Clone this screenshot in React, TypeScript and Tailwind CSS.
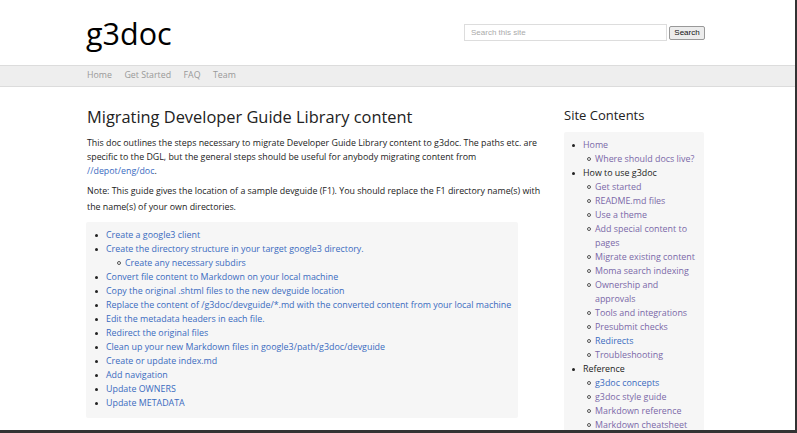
import React from "react";

type Item = { label: string; sub?: string[] };

const steps: Item[] = [
  { label: "Create a google3 client" },
  { label: "Create the directory structure in your target google3 directory.", sub: ["Create any necessary subdirs"] },
  { label: "Convert file content to Markdown on your local machine" },
  { label: "Copy the original .shtml files to the new devguide location" },
  { label: "Replace the content of /g3doc/devguide/*.md with the converted content from your local machine" },
  { label: "Edit the metadata headers in each file." },
  { label: "Redirect the original files" },
  { label: "Clean up your new Markdown files in google3/path/g3doc/devguide" },
  { label: "Create or update index.md" },
  { label: "Add navigation" },
  { label: "Update OWNERS" },
  { label: "Update METADATA" },
];

type NavLink = { label: string; fresh?: boolean };
type Section = { label: string; link: boolean; children: NavLink[] };

const toc: Section[] = [
  { label: "Home", link: true, children: [{ label: "Where should docs live?" }] },
  {
    label: "How to use g3doc",
    link: false,
    children: [
      { label: "Get started" },
      { label: "README.md files" },
      { label: "Use a theme" },
      { label: "Add special content to pages" },
      { label: "Migrate existing content" },
      { label: "Moma search indexing" },
      { label: "Ownership and approvals" },
      { label: "Tools and integrations" },
      { label: "Presubmit checks" },
      { label: "Redirects", fresh: true },
      { label: "Troubleshooting" },
    ],
  },
  {
    label: "Reference",
    link: false,
    children: [
      { label: "g3doc concepts", fresh: true },
      { label: "g3doc style guide" },
      { label: "Markdown reference" },
      { label: "Markdown cheatsheet" },
    ],
  },
];

const Disc = () => <span className="mt-[6px] mr-[8px] h-[3px] w-[3px] shrink-0 rounded-full bg-[#222]" />;
const Ring = () => (
  <span className="mt-[5px] mr-[4px] h-[4px] w-[4px] shrink-0 rounded-full border border-[#555]" />
);

const App: React.FC = () => {
  return (
    <div
      className="h-[433px] w-[797px] overflow-hidden border-r-2 border-b-[3px] border-[#333] bg-white text-[#222]"
      style={{ fontFamily: '"Open Sans", "Liberation Sans", sans-serif' }}
    >
      <header className="h-[65px]">
        <div className="ml-[86px] flex w-[619px] items-start justify-between pt-[15px]">
          <a className="text-[30.5px] leading-[36px] text-black">g3doc</a>
          <div className="mt-[9px] flex items-center gap-[2px]" style={{ fontFamily: '"Liberation Sans", Arial, sans-serif' }}>
            <input
              className="h-[17px] w-[203px] border border-[#ddd] px-[6px] text-[8px] outline-none placeholder:text-[#aaa]"
              placeholder="Search this site"
            />
            <button className="h-[14px] w-[36px] rounded-[2px] border border-[#999] bg-[#ececec] text-[8px] leading-[12px] text-[#111]">
              Search
            </button>
          </div>
        </div>
      </header>
      <nav className="h-[22px] border-y border-[#dcdcdc] bg-[#eeeeee]">
        <div className="ml-[86px] flex w-[619px] gap-[12.5px] pl-px text-[8.8px] leading-[19px] text-[#999]">
          <a>Home</a>
          <a>Get Started</a>
          <a>FAQ</a>
          <a>Team</a>
        </div>
      </nav>
      <div className="ml-[86px] flex w-[618px] gap-[18px] pt-[19px]">
        <main className="w-[460px] shrink-0">
          <h1 className="pl-px text-[16.4px] leading-[22px] text-[#222]">Migrating Developer Guide Library content</h1>
          <p className="mt-[8px] w-[456px] pl-px text-[8.85px] leading-[14px]">
            This doc outlines the steps necessary to migrate Developer Guide Library content to g3doc. The paths etc. are
            specific to the DGL, but the general steps should be useful for anybody migrating content from{" "}
            <a className="text-[#3a6bbf]">//depot/eng/doc</a>.
          </p>
          <p className="mt-[5px] pl-px text-[8.85px] leading-[16px]">
            Note: This guide gives the location of a sample devguide (F1). You should replace the F1 directory name(s) with
            the name(s) of your own directories.
          </p>
          <ul className="mt-[7px] w-[432px] rounded-[2px] bg-[#f6f6f6] pt-[6px] pb-[8px] pl-[9px] text-[8.9px] leading-[14px] text-[#3a6bbf]">
            {steps.map((s) => (
              <li key={s.label}>
                <div className="flex">
                  <Disc />
                  <span>{s.label}</span>
                </div>
                {s.sub?.map((c) => (
                  <div key={c} className="flex pl-[22px]">
                    <Ring />
                    <span>{c}</span>
                  </div>
                ))}
              </li>
            ))}
          </ul>
        </main>
        <aside className="w-[140px] shrink-0">
          <h2 className="text-[13px] leading-[18px] text-[#222]">Site Contents</h2>
          <ul className="mt-[8px] rounded-[2px] bg-[#f6f6f6] pt-[6px] pb-[6px] pl-[8px] pr-[8px] text-[8.9px] leading-[14px]">
            {toc.map((sec) => (
              <li key={sec.label}>
                <div className="flex">
                  <Disc />
                  <span className={sec.link ? "text-[#7a68a8]" : "text-[#222]"}>{sec.label}</span>
                </div>
                {sec.children.map((c) => (
                  <div key={c.label} className="flex pl-[15px]">
                    <Ring />
                    <span className={c.fresh ? "text-[#3a6bbf]" : "text-[#7a68a8]"}>{c.label}</span>
                  </div>
                ))}
              </li>
            ))}
          </ul>
        </aside>
      </div>
    </div>
  );
};

export default App;
